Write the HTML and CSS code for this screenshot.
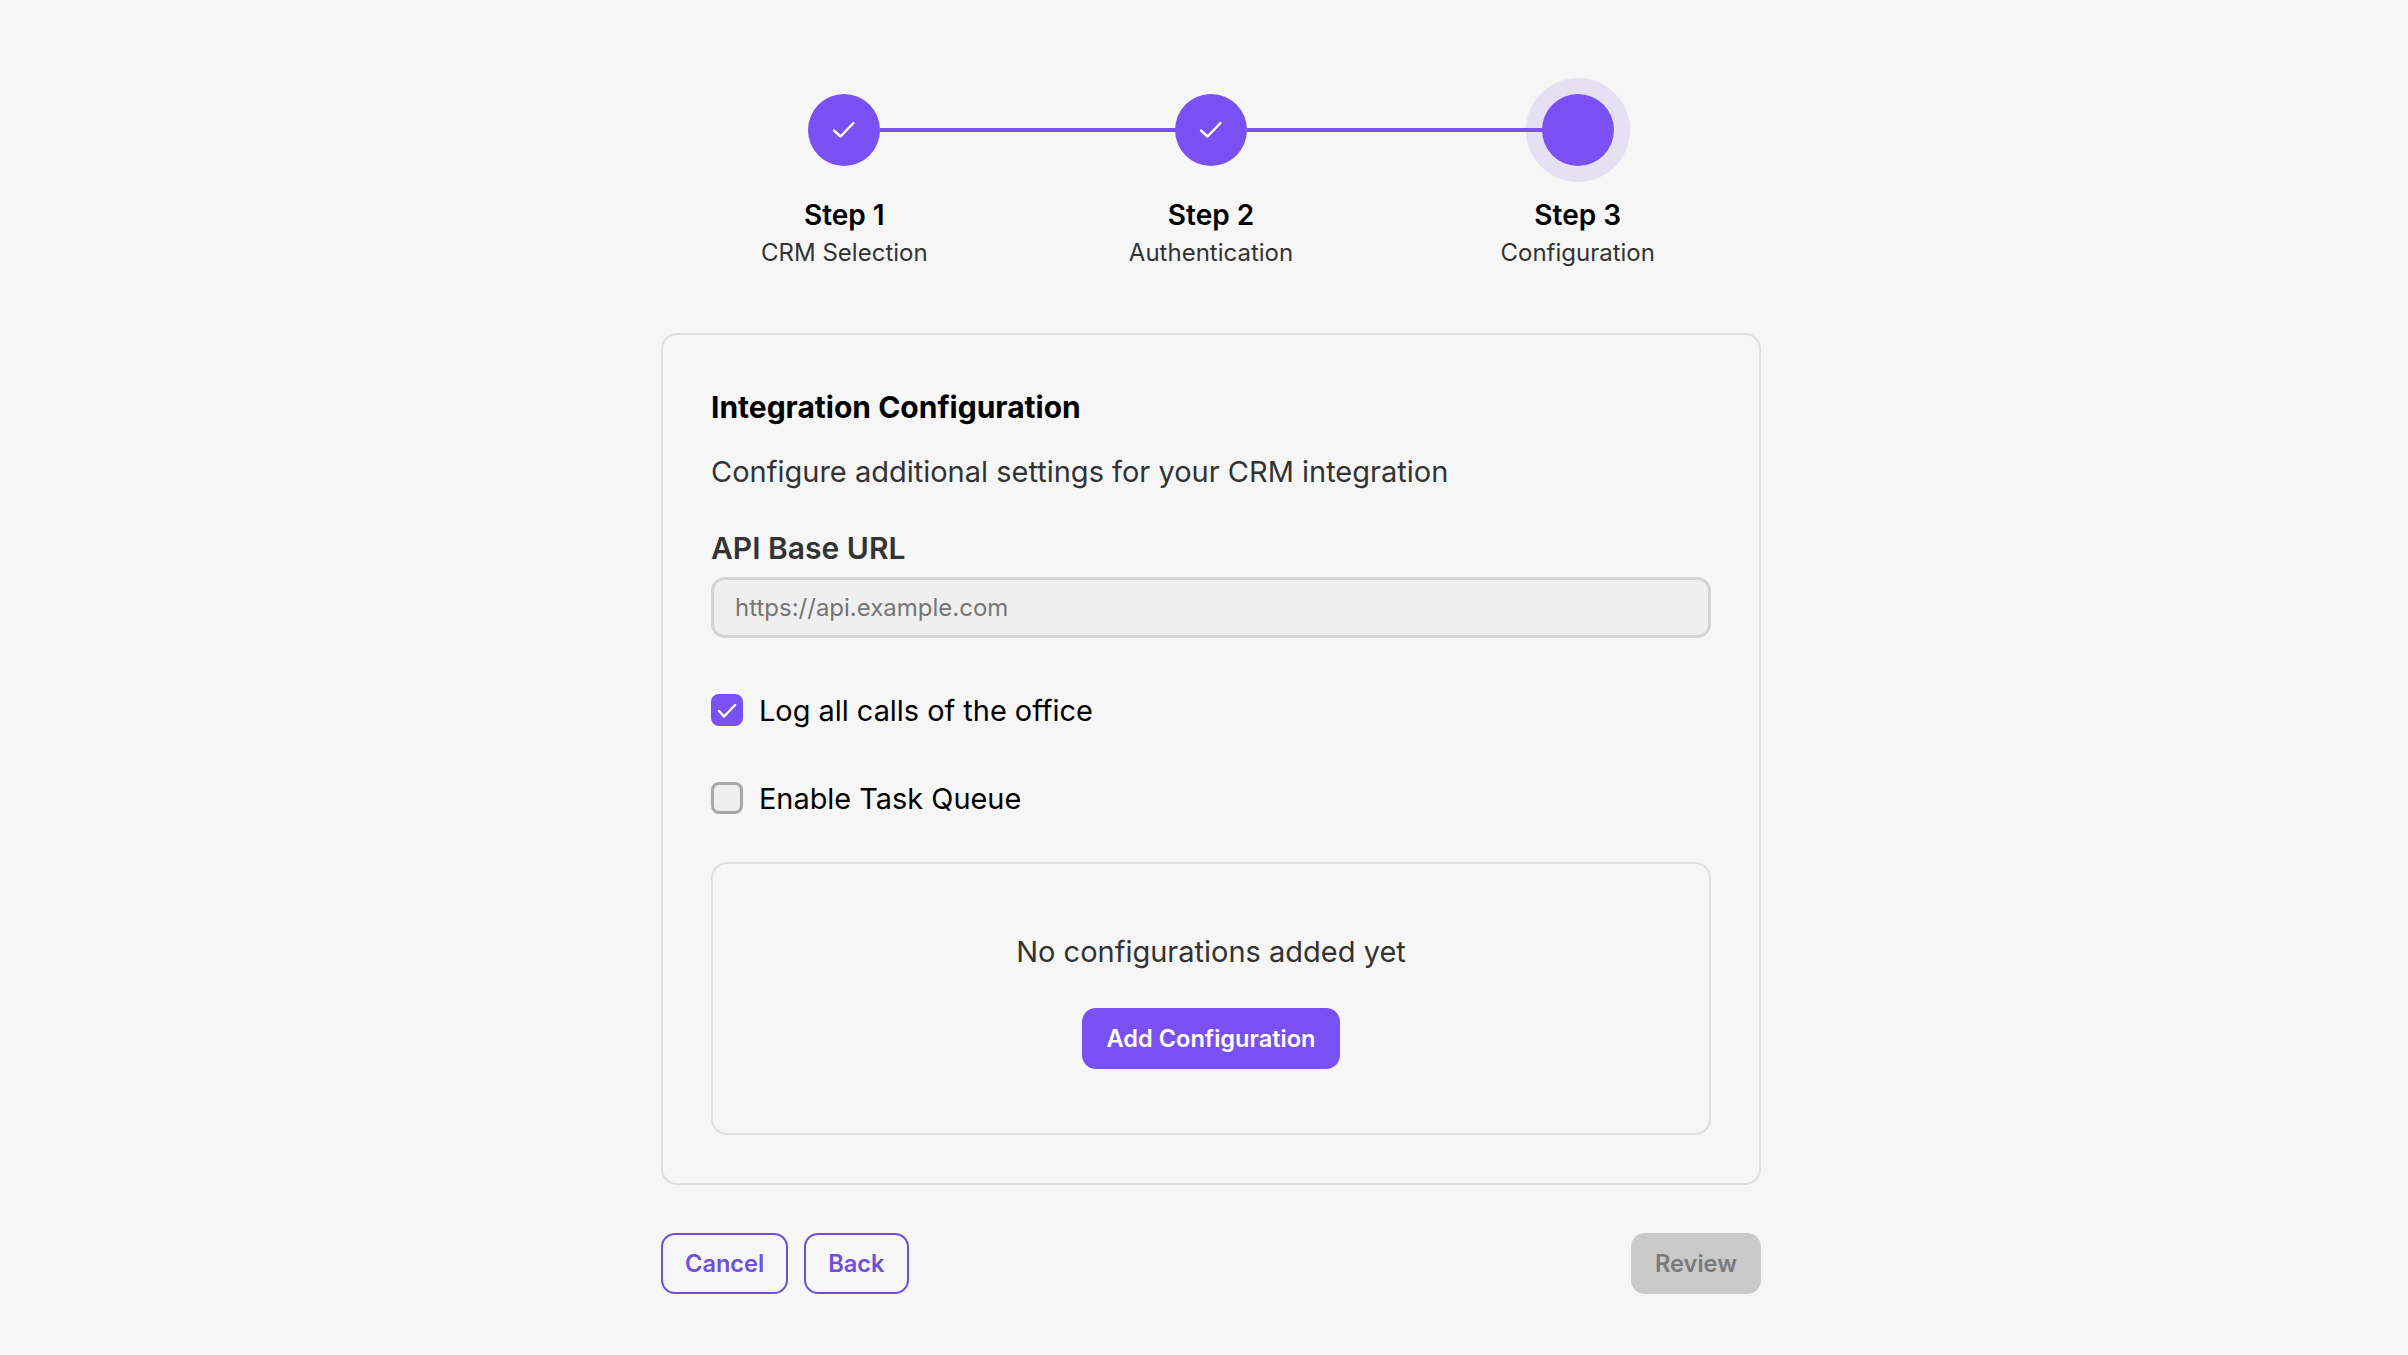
FILE: index.html
```html
<!DOCTYPE html>
<html lang="en">
<head>
    <meta charset="UTF-8">
    <meta name="viewport" content="width=device-width, initial-scale=1.0">
    <title>CRM Integration Setup</title>
    <link rel="stylesheet" href="styles.css">
</head>
<body>
    <div class="container">
        <div class="stepper">
            <div class="step done">
                <div class="step-circle">
                    <svg width="72" height="72" viewBox="0 0 72 72"><path d="M26 36.5L32.5 42.5L45.5 29" fill="none" stroke="#fff" stroke-width="2.4" stroke-linecap="round" stroke-linejoin="round"/></svg>
                </div>
                <div class="step-title">Step 1</div>
                <div class="step-desc">CRM Selection</div>
            </div>
            <div class="step done">
                <div class="step-circle">
                    <svg width="72" height="72" viewBox="0 0 72 72"><path d="M26 36.5L32.5 42.5L45.5 29" fill="none" stroke="#fff" stroke-width="2.4" stroke-linecap="round" stroke-linejoin="round"/></svg>
                </div>
                <div class="step-title">Step 2</div>
                <div class="step-desc">Authentication</div>
            </div>
            <div class="step active">
                <div class="step-circle"></div>
                <div class="step-title">Step 3</div>
                <div class="step-desc">Configuration</div>
            </div>
        </div>

        <div class="card">
            <h2>Integration Configuration</h2>
            <p class="card-desc">Configure additional settings for your CRM integration</p>

            <label class="field-label" for="apiUrl">API Base URL</label>
            <input type="text" id="apiUrl" placeholder="https://api.example.com">

            <div class="check-row first">
                <span class="check checked">
                    <svg width="32" height="32" viewBox="0 0 32 32"><path d="M8 17L13 22.5L24.2 11" fill="none" stroke="#fff" stroke-width="2.4" stroke-linecap="round" stroke-linejoin="round"/></svg>
                </span>
                <span>Log all calls of the office</span>
            </div>
            <div class="check-row">
                <span class="check"></span>
                <span>Enable Task Queue</span>
            </div>

            <div class="empty-box">
                <p>No configurations added yet</p>
                <button class="btn btn-primary">Add Configuration</button>
            </div>
        </div>

        <div class="footer">
            <div class="footer-left">
                <button class="btn btn-outline">Cancel</button>
                <button class="btn btn-outline">Back</button>
            </div>
            <button class="btn btn-disabled">Review</button>
        </div>
    </div>
</body>
</html>
```

FILE: styles.css
```css
* {
    box-sizing: border-box;
}
body {
    margin: 0;
    padding: 94px 0 0 14px;
    background-color: #f6f6f6;
    font-family: Inter, "Noto Sans", sans-serif;
    color: #2e2e2e;
}
.container {
    width: 1100px;
    margin: 0 auto;
}
.stepper {
    display: flex;
    margin-bottom: 62px;
}
.step {
    flex: 1;
    position: relative;
    display: flex;
    flex-direction: column;
    align-items: center;
}
/* line from this circle to the centre of the next one */
.step.done::after {
    content: "";
    position: absolute;
    top: 34px;
    left: calc(50% + 36px);
    width: calc(100% - 36px);
    height: 4px;
    background-color: #7950f2;
}
.step-circle {
    position: relative;
    width: 72px;
    height: 72px;
    border-radius: 50%;
    background-color: #7950f2;
    margin-bottom: 32px;
}
.step-circle svg {
    display: block;
}
/* halo sits behind the line */
.step.active .step-circle::before {
    content: "";
    position: absolute;
    top: -16px;
    left: -16px;
    width: 104px;
    height: 104px;
    border-radius: 50%;
    background-color: #e5e0f2;
    z-index: -1;
}
.step-title {
    font-size: 28px;
    line-height: 35px;
    font-weight: 600;
    color: #000;
}
.step-desc {
    margin-top: 2px;
    font-size: 24px;
    line-height: 36px;
    color: #333;
}
.card {
    border: 2px solid #dedede;
    border-radius: 16px;
    padding: 48px;
}
h2 {
    margin: 0 0 17px;
    font-size: 30px;
    line-height: 48px;
    font-weight: 700;
    color: #000;
}
.card-desc {
    margin: 0 0 32px;
    font-size: 29px;
    line-height: 48px;
    color: #333;
}
.field-label {
    display: block;
    margin-bottom: 9px;
    font-size: 30px;
    line-height: 40px;
    font-weight: 600;
    color: #333;
}
input {
    display: block;
    width: 100%;
    height: 61px;
    padding: 0 21px;
    border: 3px solid #d4d4d4;
    border-radius: 14px;
    background-color: #efefef;
    font-family: inherit;
    font-size: 24px;
}
input::placeholder {
    color: #757575;
}
.check-row {
    display: flex;
    align-items: center;
    gap: 16px;
    height: 48px;
    margin-top: 40px;
    font-size: 28.9px;
    color: #000;
}
.check-row.first {
    margin-top: 48px;
}
.check {
    width: 32px;
    height: 32px;
    flex-shrink: 0;
    border: 3px solid #a8a8a8;
    border-radius: 8px;
    background-color: #efefef;
}
.check.checked {
    border: none;
    background-color: #7950f2;
}
.check svg {
    display: block;
}
.empty-box {
    display: flex;
    flex-direction: column;
    align-items: center;
    height: 273px;
    margin-top: 40px;
    padding-top: 64px;
    border: 2px solid #dedede;
    border-radius: 16px;
}
.empty-box p {
    margin: 0 0 32px;
    font-size: 29px;
    line-height: 48px;
    color: #333;
}
.btn {
    height: 61px;
    padding: 0 24px;
    border: none;
    border-radius: 14px;
    font-family: inherit;
    font-size: 23.6px;
    font-weight: 600;
    cursor: pointer;
}
.btn-primary {
    background-color: #7950f2;
    color: #fff;
}
.btn-outline {
    padding: 0 22px;
    border: 2px solid #6f4fd8;
    background: transparent;
    color: #6f4fd8;
}
.btn-disabled {
    background-color: #cacaca;
    color: #7a7a7a;
}
.footer {
    display: flex;
    justify-content: space-between;
    margin-top: 48px;
}
.footer-left {
    display: flex;
    gap: 16px;
}
```
